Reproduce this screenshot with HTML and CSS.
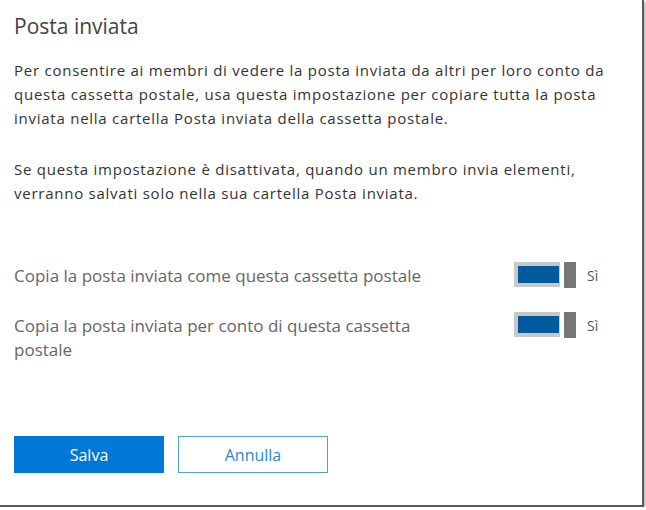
FILE: index.html
```html
<!DOCTYPE html>
<html lang="it">
<head>
    <meta charset="UTF-8">
    <title>Posta inviata</title>
    <link rel="stylesheet" href="styles.css">
</head>
<body>
    <div class="panel">
        <h1>Posta inviata</h1>

        <p>Per consentire ai membri di vedere la posta inviata da altri per loro conto da questa cassetta postale, usa questa impostazione per copiare tutta la posta inviata nella cartella Posta inviata della cassetta postale.</p>

        <p>Se questa impostazione è disattivata, quando un membro invia elementi, verranno salvati solo nella sua cartella Posta inviata.</p>

        <div class="settings">
            <div class="setting">
                <span class="label">Copia la posta inviata come questa cassetta postale</span>
                <span class="toggle"><span class="track"></span><span class="thumb"></span></span>
                <span class="state">Sì</span>
            </div>
            <div class="setting">
                <span class="label">Copia la posta inviata per conto di questa cassetta postale</span>
                <span class="toggle"><span class="track"></span><span class="thumb"></span></span>
                <span class="state">Sì</span>
            </div>
        </div>

        <div class="actions">
            <button class="btn primary">Salva</button>
            <button class="btn">Annulla</button>
        </div>
    </div>
</body>
</html>
```

FILE: styles.css
```css
body {
    margin: 0;
    background: #fff;
    font-family: "Open Sans", "Noto Sans", sans-serif;
    color: #333;
}
.panel {
    box-sizing: border-box;
    width: 644px;
    height: 507px;
    padding: 13px 14px 0;
    border-right: 2px solid #5a5a5a;
    border-bottom: 2px solid #5a5a5a;
    box-shadow: 2px 2px 2px rgba(0, 0, 0, 0.25);
}
h1 {
    margin: 0;
    font-size: 21px;
    font-weight: normal;
    line-height: 26px;
    color: #444;
}
p {
    margin: 0;
    max-width: 600px;
    font-size: 15px;
    letter-spacing: 0.75px;
    line-height: 24px;
}
h1 + p {
    margin-top: 19px;
}
p + p {
    margin-top: 27px;
}
.settings {
    margin-top: 59px;
    display: flex;
    flex-direction: column;
    gap: 26px;
}
.setting {
    display: flex;
    align-items: flex-start;
}
.label {
    width: 440px;
    font-size: 17px;
    line-height: 24px;
    color: #666;
}
.toggle {
    display: flex;
    gap: 4px;
    margin-top: -2px;
    margin-left: 60px;
}
.track {
    box-sizing: border-box;
    width: 46px;
    height: 25px;
    background: #005a9e;
    border: 4px solid #c8c8c8;
    border-right-width: 1px;
}
.thumb {
    width: 12px;
    height: 26px;
    background: #767676;
}
.state {
    margin-left: 11px;
    font-size: 14px;
    line-height: 24px;
    color: #555;
}
.actions {
    margin-top: 74px;
    display: flex;
    gap: 14px;
}
.btn {
    width: 150px;
    height: 37px;
    font-family: inherit;
    font-size: 16px;
    background: #fff;
    color: #2b88d8;
    border: 1px solid #4ca0e6;
    border-radius: 0;
}
.btn.primary {
    background: #0078d7;
    color: #fff;
    border-color: #0078d7;
}
```
